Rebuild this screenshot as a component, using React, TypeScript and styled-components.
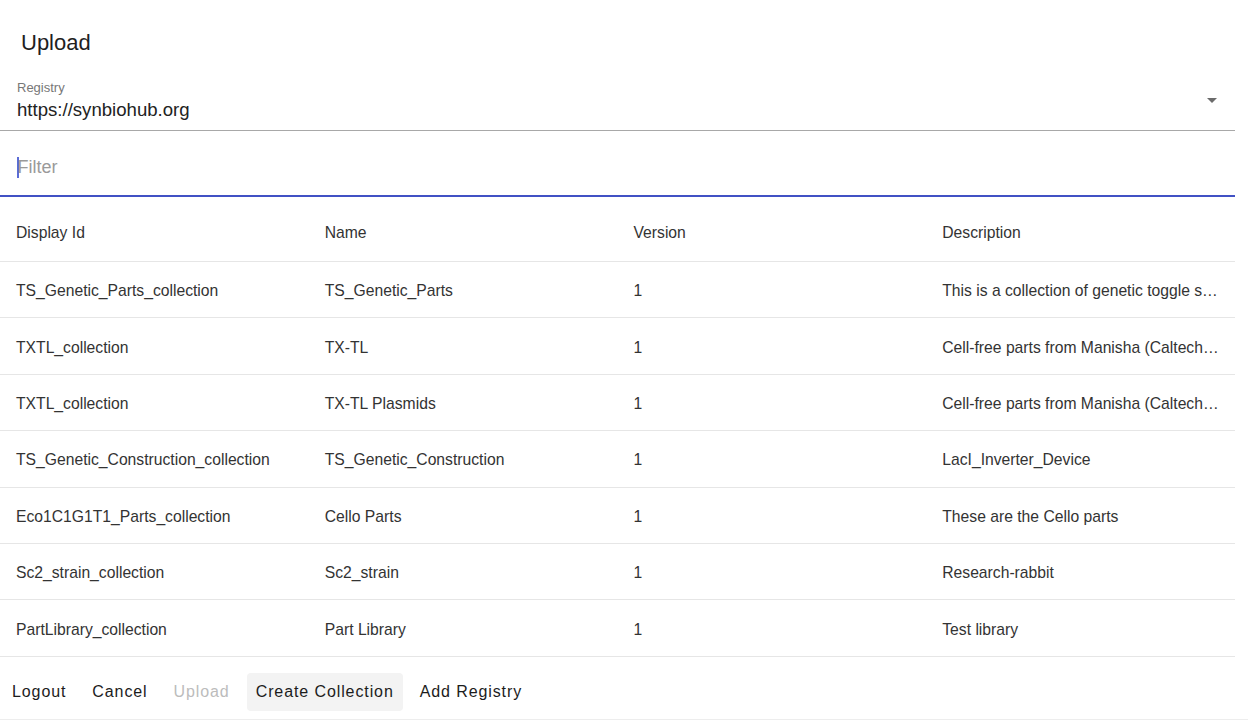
import styled, { createGlobalStyle } from "styled-components"

interface Collection {
  displayId: string
  name: string
  version: string
  description: string
}

const collections: Collection[] = [
  { displayId: "TS_Genetic_Parts_collection", name: "TS_Genetic_Parts", version: "1", description: "This is a collection of genetic toggle switch parts" },
  { displayId: "TXTL_collection", name: "TX-TL", version: "1", description: "Cell-free parts from Manisha (Caltech TX-TL toolbox)" },
  { displayId: "TXTL_collection", name: "TX-TL Plasmids", version: "1", description: "Cell-free parts from Manisha (Caltech TX-TL plasmids)" },
  { displayId: "TS_Genetic_Construction_collection", name: "TS_Genetic_Construction", version: "1", description: "LacI_Inverter_Device" },
  { displayId: "Eco1C1G1T1_Parts_collection", name: "Cello Parts", version: "1", description: "These are the Cello parts" },
  { displayId: "Sc2_strain_collection", name: "Sc2_strain", version: "1", description: "Research-rabbit" },
  { displayId: "PartLibrary_collection", name: "Part Library", version: "1", description: "Test library" },
]

const columns = ["Display Id", "Name", "Version", "Description"]

const App = () => {
  return (
    <>
      <GlobalStyle />
      <Page>
        <Main>
          <Title>Upload</Title>
          <SelectField>
            <SelectText>
              <FieldLabel>Registry</FieldLabel>
              <FieldValue>https://synbiohub.org</FieldValue>
            </SelectText>
            <DropArrow viewBox="0 0 10 5">
              <path d="M0 0l5 5 5-5z" />
            </DropArrow>
          </SelectField>
          <FilterField>
            <Caret />
            <FilterInput placeholder="Filter" />
          </FilterField>
          <Table>
            <HeaderRow>
              {columns.map((c) => (
                <Cell key={c}>{c}</Cell>
              ))}
            </HeaderRow>
            {collections.map((item, i) => (
              <BodyRow key={i}>
                {/* long descriptions are clipped with an ellipsis, as in the app */}
                <Cell>{item.displayId}</Cell>
                <Cell>{item.name}</Cell>
                <Cell>{item.version}</Cell>
                <Cell title={item.description}>{item.description}</Cell>
              </BodyRow>
            ))}
          </Table>
        </Main>
        <Actions>
          <ActionButton>Logout</ActionButton>
          <ActionButton>Cancel</ActionButton>
          <ActionButton disabled>Upload</ActionButton>
          <ActionButton $active>Create Collection</ActionButton>
          <ActionButton>Add Registry</ActionButton>
        </Actions>
      </Page>
    </>
  )
}

const GlobalStyle = createGlobalStyle`
  body {
    margin: 0;
    background: #fff;
    font-family: "Liberation Sans", Arial, sans-serif;
    color: rgba(0, 0, 0, 0.87);
  }
`

const Page = styled.div`
  width: 1248px;
  height: 720px;
  display: flex;
  flex-direction: column;
  overflow: hidden;
`

const Main = styled.div`
  display: flex;
  flex-direction: column;
  padding-right: 13px;
`

const Title = styled.h2`
  margin: 0;
  padding: 30px 0 0 21px;
  font-size: 22px;
  line-height: 26px;
  font-weight: 400;
  color: #1f1f1f;
`

const SelectField = styled.div`
  display: flex;
  flex-direction: row;
  margin-top: 24px;
  padding: 0 18px 9px 17px;
  border-bottom: 1px solid #a8a8a8;
`

const SelectText = styled.div`
  flex: 1;
  display: flex;
  flex-direction: column;
  gap: 3px;
`

const FieldLabel = styled.span`
  font-size: 13px;
  line-height: 16px;
  color: #777;
`

const FieldValue = styled.span`
  font-size: 18.6px;
  line-height: 22px;
  color: #222;
`

const DropArrow = styled.svg`
  width: 10px;
  height: 5px;
  margin-top: 18px;
  fill: #6b6b6b;
`

const FilterField = styled.div`
  display: flex;
  flex-direction: row;
  align-items: center;
  padding: 25px 0 17px 17px;
  border-bottom: 2px solid #4151c4;
`

const Caret = styled.span`
  width: 1.5px;
  height: 21px;
  background: #5b6cd6;
  margin-right: -1px;
`

const FilterInput = styled.input`
  flex: 1;
  border: none;
  outline: none;
  padding: 0;
  font-family: inherit;
  font-size: 18px;
  line-height: 22px;
  height: 22px;
  background: transparent;

  &::placeholder {
    color: #9a9a9a;
  }
`

const Table = styled.div`
  display: flex;
  flex-direction: column;
`

const HeaderRow = styled.div`
  display: grid;
  grid-template-columns: repeat(4, 1fr);
  align-items: center;
  box-sizing: border-box;
  height: 65px;
  padding-top: 8px;
  border-bottom: 1px solid #e6e6e6;
`

const BodyRow = styled.div`
  display: grid;
  grid-template-columns: repeat(4, 1fr);
  align-items: center;
  box-sizing: border-box;
  height: 56.4px;
  padding-top: 3px;
  border-bottom: 1px solid #e6e6e6;
`

const Cell = styled.div`
  padding: 0 13px 0 16px;
  font-size: 15.7px;
  line-height: 20px;
  color: #333;
  white-space: nowrap;
  overflow: hidden;
  text-overflow: ellipsis;
`

const Actions = styled.div`
  display: flex;
  flex-direction: row;
  align-items: center;
  gap: 8px;
  padding: 16px 0 8px 3px;
  border-bottom: 1px solid #ededed;
`

const ActionButton = styled.button<{ $active?: boolean }>`
  height: 38px;
  padding: 0 9px;
  border: none;
  border-radius: 4px;
  background: ${(p) => (p.$active ? "#f3f3f3" : "transparent")};
  font-family: "Liberation Sans", Arial, sans-serif;
  font-size: 16px;
  font-weight: 500;
  letter-spacing: 0.9px;
  color: #1c1c1c;
  cursor: pointer;

  &:disabled {
    color: #bcbcbc;
    cursor: default;
  }
`

export default App
